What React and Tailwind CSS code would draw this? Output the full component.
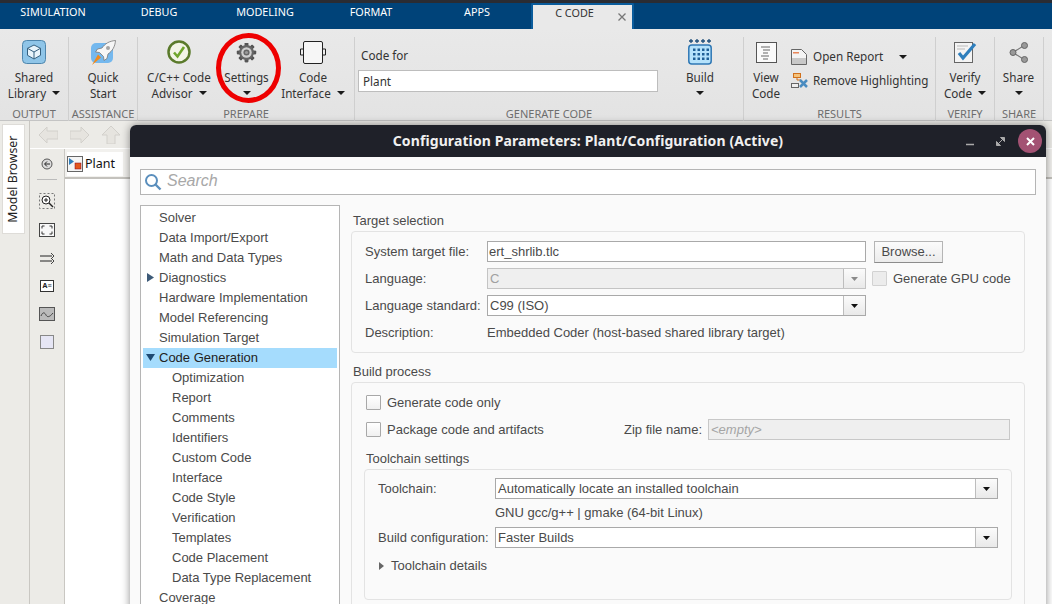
import React from 'react';

const Caret = ({ className = '' }) => (
  <svg width="8" height="4" viewBox="0 0 8 4" className={className}><path d="M0 0h8L4 4z" fill="#1a1a1a" /></svg>
);

const Group = ({ label, width, children }) => (
  <div className="flex flex-col border-r border-[#cfcfcf] h-[84px] mt-2 shrink-0" style={{ width }}>
    <div className="flex-1 flex min-h-0">{children}</div>
    <div className="h-[14px] text-center text-[11px] leading-[14px] text-[#6e6e6e] whitespace-nowrap">{label}</div>
  </div>
);

const BigButton = ({ icon, lines, caretInline, caretBelow, width }) => (
  <div className="flex flex-col items-center shrink-0 text-[11.7px] leading-4 text-[#333]" style={{ width }}>
    <div className="h-[30px] flex items-center justify-center">{icon}</div>
    <div className="mt-[2px] text-center whitespace-nowrap">{lines[0]}</div>
    <div className="text-center whitespace-nowrap h-4 flex items-center gap-[6px]">
      {lines[1]}
      {caretInline && <Caret />}
      {caretBelow && <Caret />}
    </div>
  </div>
);

const CubeIcon = () => (
  <svg width="24" height="24" viewBox="0 0 24 24">
    <rect x="0.5" y="0.5" width="23" height="23" rx="4" fill="#8fc5e8" stroke="#4f86ad" />
    <path d="M12 5l6.5 3.3v7L12 19l-6.5-3.7v-7z" fill="#e8f4fb" stroke="#35607f" />
    <path d="M5.5 8.3L12 12l6.5-3.7M12 12v7" fill="none" stroke="#35607f" />
  </svg>
);

const RocketIcon = () => (
  <svg width="25" height="25" viewBox="0 0 25 25">
    <rect x="0" y="3" width="22" height="20" rx="5" fill="#74b8ee" />
    <path d="M24.500 .5c-6 .5-10.500 3-13.500 7.500l-4.500 1-2 3 4 .5 4 4 .5 4 3-2 1-4.500c4.500-3 7-7.500 7.500-13.500z" fill="#f6f6f6" stroke="#777" strokeWidth="0.8" />
    <circle cx="17" cy="8" r="2" fill="#a5a5a5" />
    <path d="M7 14.500l3 3L1 25z" fill="#f08a1d" />
  </svg>
);

const CheckIcon = () => (
  <svg width="24" height="24" viewBox="0 0 24 24">
    <circle cx="12" cy="12" r="10.500" fill="#f2f4e6" stroke="#5a7a2b" strokeWidth="2.500" />
    <path d="M7 12.500l3.500 4L17 7" fill="none" stroke="#6fa52c" strokeWidth="2.600" />
  </svg>
);

const GearIcon = () => (
  <svg width="21" height="21" viewBox="0 0 24 24">
    <g fill="#555">
      {[0, 45, 90, 135, 180, 225, 270, 315].map((a) => (
        <rect key={a} x="10" y="1" width="4" height="22" rx="0.8" transform={`rotate(${a} 12 12)`} />
      ))}
    </g>
    <circle cx="12" cy="12" r="8.500" fill="#666" />
    <circle cx="12" cy="12" r="6" fill="#d0d0d0" />
    <circle cx="12" cy="12" r="3.500" fill="#666" />
    <circle cx="12" cy="12" r="1.800" fill="#9a9a9a" />
  </svg>
);

const BlockIcon = () => (
  <svg width="26" height="23" viewBox="0 0 26 23">
    <rect x="3.500" y="0.500" width="19" height="22" rx="1.500" fill="#f6f6f6" stroke="#222" />
    <path d="M.5 8h3v6h-3zM22.500 8h3v6h-3z" fill="#eee" stroke="#222" />
  </svg>
);

const BuildIcon = () => (
  <svg width="24" height="26" viewBox="0 0 24 26">
    <path d="M3 0v4M1 2h4M9 0v4M7 2h4M15 0v4M13 2h4M21 0v4M19 2h4" stroke="#1f4f7a" strokeWidth="1.300" />
    <rect x="0.800" y="6" width="22.400" height="19" rx="3" fill="#b5e2fb" stroke="#2f78b5" strokeWidth="1.500" />
    {[9.500, 14, 18.500].map((y) => [5, 9.500, 14, 18.500].map((x) => <rect key={`${x}-${y}`} x={x} y={y} width="2.500" height="2.500" fill="#1f5f96" />))}
  </svg>
);

const CodeIcon = () => (
  <svg width="21" height="21" viewBox="0 0 21 21">
    <rect x="0.500" y="0.500" width="20" height="20" fill="#fafafa" stroke="#555" />
    <path d="M5 5h9M7 8h7M7 11h5M5 14h8M7 17h5" stroke="#666" />
  </svg>
);

const ReportIcon = () => (
  <svg width="16" height="16" viewBox="0 0 16 16">
    <path d="M.5.500h10l5 5v10H.5z" fill="#f4f4f4" stroke="#666" />
    <path d="M2 3h6v1.500H2z" fill="#e9875a" />
    <path d="M1 9h14v6H1z" fill="#c8c8c8" />
  </svg>
);

const RemoveIcon = () => (
  <svg width="17" height="16" viewBox="0 0 17 16">
    <rect x="2.500" y="0.500" width="7" height="4" fill="#f5c27a" stroke="#d0701c" />
    <rect x="0.500" y="10.500" width="7" height="4" fill="#eee" stroke="#666" />
    <path d="M6 5v2h4" fill="none" stroke="#d0701c" />
    <path d="M9 7l7 7M16 7l-7 7" stroke="#4a8cc0" strokeWidth="2.500" />
  </svg>
);

const VerifyIcon = () => (
  <svg width="23" height="22" viewBox="0 0 23 22">
    <rect x="0.500" y="1.500" width="18" height="20" fill="#f4f4f4" stroke="#666" />
    <path d="M3 5h11M3 8h8" stroke="#bbb" />
    <path d="M5 12l4 5L21 3" fill="none" stroke="#2f7fbd" strokeWidth="3.200" />
  </svg>
);

const ShareIcon = () => (
  <svg width="20" height="21" viewBox="0 0 20 21">
    <path d="M4 10.500L15 3.500M4 10.500l11 7" stroke="#777" strokeWidth="1.200" />
    <circle cx="4" cy="10.500" r="3" fill="#999" stroke="#666" />
    <circle cx="15.500" cy="3.500" r="3" fill="#999" stroke="#666" />
    <circle cx="15.500" cy="17.500" r="3" fill="#999" stroke="#666" />
  </svg>
);

const Ribbon = () => (
  <div className="h-[92px] bg-gradient-to-b from-[#e9e9e9] to-[#e3e3e3] border-b border-[#c4c4c4] flex pl-0 font-['Noto_Sans',sans-serif] shrink-0">
    <Group label="OUTPUT" width={69}>
      <BigButton width={68} icon={<CubeIcon />} lines={['Shared', 'Library']} caretInline />
    </Group>
    <Group label="ASSISTANCE" width={69}>
      <BigButton width={68} icon={<RocketIcon />} lines={['Quick', 'Start']} />
    </Group>
    <Group label="PREPARE" width={217}>
      <BigButton width={82} icon={<CheckIcon />} lines={['C/C++ Code', 'Advisor']} caretInline />
      <BigButton width={53} icon={<GearIcon />} lines={['Settings', '']} caretBelow />
      <BigButton width={80} icon={<BlockIcon />} lines={['Code', 'Interface']} caretInline />
    </Group>
    <Group label="GENERATE CODE" width={389}>
      <div className="w-[321px] pl-[3px] pt-[10px] text-[11.7px] text-[#333] shrink-0">
        <div className="pl-[3px] h-4 leading-4">Code for</div>
        <div className="mt-[7px] h-[22px] w-[300px] bg-white border border-[#bdbdbd] pl-1 leading-5">Plant</div>
      </div>
      <BigButton width={48} icon={<BuildIcon />} lines={['Build', '']} caretBelow />
    </Group>
    <Group label="RESULTS" width={192}>
      <BigButton width={44} icon={<CodeIcon />} lines={['View', 'Code']} />
      <div className="flex flex-col pl-[3px] pt-[12px] text-[11.7px] text-[#333] gap-2 whitespace-nowrap">
        <div className="flex items-center h-4 gap-[6px]"><ReportIcon /><span>Open Report</span><Caret className="ml-[10px]" /></div>
        <div className="flex items-center h-4 gap-[5px]"><RemoveIcon /><span>Remove Highlighting</span></div>
      </div>
    </Group>
    <Group label="VERIFY" width={59}>
      <BigButton width={58} icon={<VerifyIcon />} lines={['Verify', 'Code']} caretInline />
    </Group>
    <Group label="SHARE" width={49}>
      <BigButton width={47} icon={<ShareIcon />} lines={['Share', '']} caretBelow />
    </Group>
  </div>
);

const TABS = ['SIMULATION', 'DEBUG', 'MODELING', 'FORMAT', 'APPS'];

const TabBar = () => (
  <div className="h-[29px] bg-[#004379] border-t-[3px] border-[#2a2c33] flex items-start text-[10.8px] text-white font-['Noto_Sans',sans-serif] shrink-0">
    {TABS.map((t) => (
      <div key={t} className="w-[106px] h-[20px] leading-[18px] text-center">{t}</div>
    ))}
    <div className="ml-[1px] w-[103px] h-[26px] bg-[#e9e9e9] border-x-2 border-t-2 border-[#0a5c9c] rounded-t-[2px] text-[#333] flex relative">
      <span className="w-[83px] text-center leading-[16px]">C CODE</span>
      <svg width="8" height="8" viewBox="0 0 8 8" className="absolute right-[6px] top-[8px]"><path d="M.5.500l7 7M7.500.500l-7 7" stroke="#777" strokeWidth="1.300" /></svg>
    </div>
  </div>
);

const ToolGlyph = ({ children, className = '' }) => <div className={`h-[28px] flex items-center justify-center ${className}`}>{children}</div>;

const Workspace = () => (
  <div className="flex-1 flex min-h-0 bg-[#ecebe7] font-['Noto_Sans',sans-serif]">
    <div className="w-[30px] shrink-0 border-r border-[#c9c7c2] pt-[3px] pl-[2px]">
      <div className="w-[23px] h-[110px] bg-white border border-[#dedcd8] flex items-center justify-center pl-[1px]">
        <span className="text-[12.3px] text-[#222] whitespace-nowrap -rotate-90">Model Browser</span>
      </div>
    </div>
    <div className="flex-1 flex flex-col min-w-0">
      <div className="h-[28px] border-b border-white flex items-center gap-[12px] pl-[8px] shrink-0">
        {['M9 1L1 9l8 8v-4h11V5H9z', 'M11 1l8 8-8 8v-4H0V5h11z', 'M9 0l9 9h-5v9H5V9H0z'].map((d) => (
          <svg key={d} width="20" height="18" viewBox="0 0 20 18"><path d={d} fill="#e6e4df" stroke="#d2d0cb" /></svg>
        ))}
      </div>
      <div className="flex-1 flex min-h-0">
        <div className="w-[35px] shrink-0 border-r border-[#c9c7c2] flex flex-col items-center pt-[1px]">
          <ToolGlyph>
            <svg width="12" height="12" viewBox="0 0 12 12"><circle cx="6" cy="6" r="5" fill="#ddd" stroke="#555" /><path d="M9 6H4M6 3.500L3.500 6 6 8.500" fill="none" stroke="#222" /></svg>
          </ToolGlyph>
          <div className="w-[20px] h-px bg-[#bbb] mt-[1px] mb-[7px]" />
          <ToolGlyph className="mb-[1px]">
            <svg width="16" height="16" viewBox="0 0 16 16"><rect x=".5" y=".5" width="15" height="15" fill="none" stroke="#777" strokeDasharray="2 2" /><circle cx="7" cy="7" r="4" fill="#fff" stroke="#222" /><path d="M10 10l4 4" stroke="#222" strokeWidth="1.500" /><path d="M5 7h4M7 5v4" stroke="#222" /></svg>
          </ToolGlyph>
          <ToolGlyph>
            <svg width="16" height="14" viewBox="0 0 16 14"><rect x=".5" y=".5" width="15" height="13" fill="#f7f7f7" stroke="#444" /><path d="M3 3h2.500M3 3v2.500M13 3h-2.500M13 3v2.500M3 11h2.500M3 11V8.500M13 11h-2.500M13 11V8.500" stroke="#333" /></svg>
          </ToolGlyph>
          <ToolGlyph>
            <svg width="15" height="11" viewBox="0 0 15 11"><path d="M0 3h12M0 8h12" stroke="#222" /><path d="M11 0l3 3-3 3M11 5l3 3-3 3" fill="none" stroke="#444" /></svg>
          </ToolGlyph>
          <ToolGlyph>
            <div className="w-[14px] h-[12px] bg-white border border-[#333] text-[7px] leading-[10px] font-bold text-center text-[#222]">A≡</div>
          </ToolGlyph>
          <ToolGlyph>
            <svg width="16" height="14" viewBox="0 0 16 14"><rect x=".5" y=".5" width="15" height="13" fill="#bbb" stroke="#555" /><path d="M2 9c2-5 4-3 5-1s3 3 7-2" fill="none" stroke="#444" /></svg>
          </ToolGlyph>
          <ToolGlyph>
            <div className="w-[14px] h-[14px] bg-[#e6e6f5] border border-[#888]" />
          </ToolGlyph>
        </div>
        <div className="flex-1 flex flex-col min-w-0 bg-white">
          <div className="h-[30px] bg-[#f2f1ee] border-b-2 border-[#c4c2bd] pl-[2px] pt-[3px] flex items-start shrink-0">
            <div className="h-[24px] pr-2 flex items-center gap-[2px] bg-white text-[12.5px] text-[#111]">
              <svg width="16" height="16" viewBox="0 0 16 16"><rect x=".5" y=".5" width="15" height="15" fill="#f5f5f5" stroke="#666" /><path d="M2 2l5 3.500L2 9z" fill="#2f7fbd" /><rect x="8" y="7" width="6" height="6" fill="#e2571e" stroke="#802" strokeWidth=".5" /></svg>
              Plant
            </div>
          </div>
          <div className="flex-1" />
        </div>
      </div>
    </div>
  </div>
);

const TREE = [
  ['Solver', 0], ['Data Import/Export', 0], ['Math and Data Types', 0], ['Diagnostics', 0, 'right'],
  ['Hardware Implementation', 0], ['Model Referencing', 0], ['Simulation Target', 0], ['Code Generation', 0, 'down'],
  ['Optimization', 1], ['Report', 1], ['Comments', 1], ['Identifiers', 1], ['Custom Code', 1], ['Interface', 1],
  ['Code Style', 1], ['Verification', 1], ['Templates', 1], ['Code Placement', 1], ['Data Type Replacement', 1], ['Coverage', 0],
];

const Tree = () => (
  <div className="w-[200px] h-[400px] bg-white border border-[#b5b5b5] ml-[10px] pl-[2px] pr-[2px] pt-[2px] shrink-0 overflow-hidden">
    {TREE.map(([label, depth, arrow]) => (
      <div key={label} className={`h-[20px] leading-[20px] relative whitespace-nowrap ${arrow === 'down' ? 'bg-[#a5dcfd] text-[#222]' : 'text-[#4a4a4a]'} ${depth ? 'pl-[29px]' : 'pl-[16px]'}`}>
        {arrow === 'right' && <svg width="7" height="9" viewBox="0 0 7 9" className="absolute left-[4px] top-[5px]"><path d="M0 0l7 4.500L0 9z" fill="#3d5a78" /></svg>}
        {arrow === 'down' && <svg width="9" height="7" viewBox="0 0 9 7" className="absolute left-[3px] top-[6px]"><path d="M0 0h9L4.500 7z" fill="#1d4a73" /></svg>}
        {label}
      </div>
    ))}
  </div>
);

const ComboArrow = ({ disabled }) => (
  <div className="w-[22px] h-full border-l border-[#bdbdbd] bg-gradient-to-b from-[#fbfbfb] to-[#e9e9e9] flex items-center justify-center shrink-0">
    <svg width="7" height="4" viewBox="0 0 7 4"><path d="M0 0h7L3.500 4z" fill={disabled ? '#8a8a8a' : '#111'} /></svg>
  </div>
);

const Combo = ({ value, width, disabled }) => (
  <div className={`h-[21px] border border-[#a9a9a9] flex shrink-0 ${disabled ? 'bg-[#efefef] text-[#a0a0a0] border-[#c4c4c4]' : 'bg-white text-[#4a4a4a]'}`} style={{ width }}>
    <div className="flex-1 pl-[2px] leading-[19px] truncate">{value}</div>
    <ComboArrow disabled={disabled} />
  </div>
);

const CheckBox = ({ disabled }) => (
  <div className={`w-[15px] h-[15px] border rounded-[1px] shrink-0 ${disabled ? 'bg-[#ececec] border-[#d2d2d2]' : 'bg-gradient-to-b from-white to-[#f0f0f0] border-[#a8a8a8]'}`} />
);

const SectionBox = ({ className = '', children }) => (
  <div className={`border border-[#e3e3e3] rounded-[4px] ${className}`}>{children}</div>
);

const Settings = () => (
  <div className="flex-1 min-w-0 pl-[11px] pr-[21px] text-[13px] text-[#4a4a4a]">
    <div className="h-[20px] mt-[6px] leading-[20px] pl-[2px]">Target selection</div>
    <SectionBox className="h-[122px] pl-[13px] pt-[9px]">
      <div className="flex items-center h-[21px]">
        <span className="w-[122px] shrink-0">System target file:</span>
        <div className="w-[379px] h-[21px] bg-white border border-[#a9a9a9] pl-[1px] leading-[19px]">ert_shrlib.tlc</div>
        <div className="ml-[8px] w-[69px] h-[22px] border border-[#b5b5b5] border-b-[#8c8c8c] bg-gradient-to-b from-[#fbfbfb] to-[#ececec] text-center leading-[20px]">Browse...</div>
      </div>
      <div className="flex items-center h-[21px] mt-[6px]">
        <span className="w-[122px] shrink-0">Language:</span>
        <Combo value="C" width={379} disabled />
        <div className="ml-[6px]"><CheckBox disabled /></div>
        <span className="ml-[6px] whitespace-nowrap">Generate GPU code</span>
      </div>
      <div className="flex items-center h-[21px] mt-[6px]">
        <span className="w-[122px] shrink-0">Language standard:</span>
        <Combo value="C99 (ISO)" width={379} />
      </div>
      <div className="flex items-center h-[21px] mt-[6px]">
        <span className="w-[122px] shrink-0">Description:</span>
        <span>Embedded Coder (host-based shared library target)</span>
      </div>
    </SectionBox>
    <div className="h-[20px] mt-[9px] leading-[20px] pl-[2px]">Build process</div>
    <SectionBox className="h-[241px] pl-[14px] pr-[14px] pt-[12px]">
      <div className="flex items-center h-[15px] gap-[6px]"><CheckBox /><span>Generate code only</span></div>
      <div className="flex items-center h-[21px] mt-[9px]">
        <CheckBox />
        <span className="ml-[6px] w-[237px] shrink-0">Package code and artifacts</span>
        <span className="w-[84px] shrink-0">Zip file name:</span>
        <div className="w-[302px] h-[21px] bg-[#efefef] border border-[#c8c8c8] pl-[2px] leading-[19px] italic text-[#a5a5a5]">{'<empty>'}</div>
      </div>
      <div className="h-[20px] mt-[9px] leading-[20px]">Toolchain settings</div>
      <SectionBox className="h-[131px] -ml-[2px] mr-[-2px] pl-[13px] pt-[8px]">
        <div className="flex items-center h-[21px]">
          <span className="w-[117px] shrink-0">Toolchain:</span>
          <Combo value="Automatically locate an installed toolchain" width={503} />
        </div>
        <div className="pl-[117px] h-[20px] mt-[4px] leading-[20px]">GNU gcc/g++ | gmake (64-bit Linux)</div>
        <div className="flex items-center h-[21px] mt-[4px]">
          <span className="w-[117px] shrink-0">Build configuration:</span>
          <Combo value="Faster Builds" width={503} />
        </div>
        <div className="flex items-center h-[20px] mt-[8px] gap-[7px] pl-[1px]">
          <svg width="5" height="8" viewBox="0 0 5 8"><path d="M0 0l5 4-5 4z" fill="#666" /></svg>
          Toolchain details
        </div>
      </SectionBox>
    </SectionBox>
  </div>
);

const ConfigDialog = () => (
  <div className="absolute left-[130px] top-[125px] w-[916px] h-[520px] bg-[#fafafa] rounded-t-[6px] shadow-[0_0_8px_rgba(0,0,0,0.45)] font-['Liberation_Sans',sans-serif] text-[13px] overflow-hidden flex flex-col">
    <div className="h-[32px] pb-[2px] bg-[#1f2129] flex items-center relative shrink-0 font-['Noto_Sans',sans-serif]">
      <div className="w-full text-center text-[14px] font-bold text-[#f0f0f0] tracking-[0.1px]">Configuration Parameters: Plant/Configuration (Active)</div>
      <svg width="9" height="9" viewBox="0 0 9 9" className="absolute left-[836px] top-[12px]"><path d="M0 7.500h8" stroke="#aaa" strokeWidth="1.500" /></svg>
      <svg width="9" height="9" viewBox="0 0 9 9" className="absolute left-[866px] top-[12px]"><path d="M4.500.500H8.500V4.500zM4.500 8.500H.5V4.500zM7 2L2 7" fill="#aaa" stroke="#aaa" /></svg>
      <div className="absolute left-[888px] top-[4px] w-[24px] h-[24px] rounded-full bg-[#a35273] flex items-center justify-center">
        <svg width="9" height="9" viewBox="0 0 9 9"><path d="M1 1l7 7M8 1L1 8" stroke="#fff" strokeWidth="2" /></svg>
      </div>
    </div>
    <div className="mx-[10px] mt-[12px] h-[26px] bg-white border border-[#b5b5b5] flex items-center pl-[3px] gap-[5px] shrink-0">
      <svg width="18" height="18" viewBox="0 0 18 18"><circle cx="7.500" cy="7.500" r="5.500" fill="none" stroke="#5b8fbd" strokeWidth="2" /><path d="M11.500 11.500l5 5" stroke="#5b8fbd" strokeWidth="2.400" /></svg>
      <span className="text-[16px] italic text-[#a8a8a8] pb-[2px]">Search</span>
    </div>
    <div className="flex mt-[10px] min-h-0 flex-1">
      <Tree />
      <Settings />
    </div>
  </div>
);

export default function App() {
  return (
    <div className="relative w-[1052px] h-[604px] overflow-hidden flex flex-col">
      <TabBar />
      <Ribbon />
      <Workspace />
      <ConfigDialog />
      {/* red annotation round the Settings button */}
      <div className="absolute left-[216px] top-[33px] w-[65px] h-[70px] rounded-[50%] border-[5px] border-[#ee0000]" />
    </div>
  );
}
